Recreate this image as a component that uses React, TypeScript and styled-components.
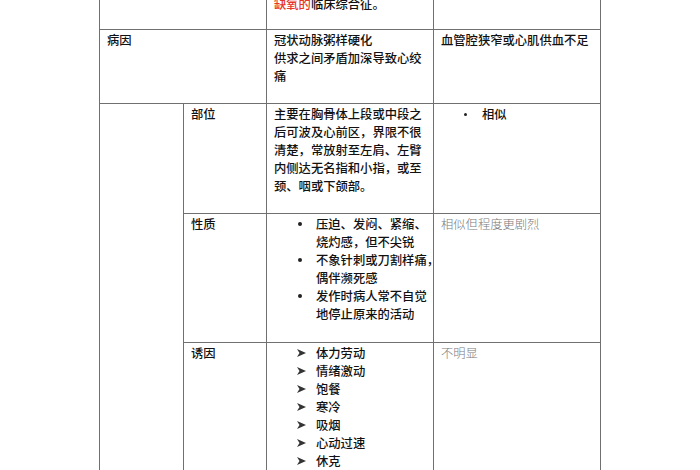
import React from 'react';
import styled, { createGlobalStyle } from 'styled-components';

const GlobalStyle = createGlobalStyle`
  html, body {
    margin: 0;
    padding: 0;
    background: #fff;
    overflow: hidden;
  }
  body {
    font-family: "Noto Sans CJK SC", "Noto Sans", sans-serif;
  }
`;

const Page = styled.div`
  width: 700px;
  height: 470px;
  overflow: hidden;
  padding-left: 99px;
  box-sizing: border-box;
`;

const Table = styled.table`
  border-collapse: collapse;
  table-layout: fixed;
  width: 501px;
  margin-top: -19px;
  font-size: 12.3px;
  line-height: 18px;
  font-weight: 500;
  color: #111;
`;

const Col = styled.col<{ $w: number }>`
  width: ${(p) => p.$w}px;
`;

const Row = styled.tr<{ $h: number }>`
  height: ${(p) => p.$h}px;
`;

const Cell = styled.td<{ $bottom?: boolean }>`
  border: 1px solid #707070;
  padding: ${(p) => (p.$bottom ? '0 7px 16px' : '1px 7px 0')};
  vertical-align: ${(p) => (p.$bottom ? 'bottom' : 'top')};
  white-space: nowrap;
`;

const Red = styled.span`
  color: #e8352b;
`;

const Line = styled.div``;

const Muted = styled.div`
  color: #7a7a7a;
  font-weight: 300;
`;

const List = styled.ul<{ $indent: number }>`
  list-style: none;
  margin: 0;
  padding: 0 0 0 ${(p) => p.$indent}px;
`;

const Item = styled.li`
  display: flex;
  align-items: flex-start;
`;

const Marker = styled.span<{ $size?: number }>`
  flex: 0 0 19px;
  display: flex;
  align-items: center;
  height: 18px;
  &::before {
    content: '';
    display: block;
    width: ${(p) => p.$size ?? 4}px;
    height: ${(p) => p.$size ?? 4}px;
    border-radius: 50%;
    background: #222;
    margin-left: 1px;
  }
`;

const ArrowMark = styled.span`
  flex: 0 0 19px;
  display: flex;
  align-items: center;
  height: 18px;
`;

const Arrow: React.FC = () => (
  <ArrowMark>
    <svg width="9" height="8" viewBox="0 0 9 8">
      <path d="M0 0 L9 4 L0 8 L2.5 4 Z" fill="#333" />
    </svg>
  </ArrowMark>
);

const Lines: React.FC<{ lines: string[] }> = ({ lines }) => (
  <>
    {lines.map((l, i) => (
      <Line key={i}>{l}</Line>
    ))}
  </>
);

const nature = [
  ['压迫、发闷、紧缩、', '烧灼感，但不尖锐'],
  ['不象针刺或刀割样痛，', '偶伴濒死感'],
  ['发作时病人常不自觉', '地停止原来的活动'],
];

const triggers = ['体力劳动', '情绪激动', '饱餐', '寒冷', '吸烟', '心动过速', '休克'];

const App: React.FC = () => {
  return (
    <Page>
      <GlobalStyle />
      <Table>
        <colgroup>
          <Col $w={84} />
          <Col $w={83} />
          <Col $w={167} />
          <Col $w={167} />
        </colgroup>
        <tbody>
          <Row $h={48}>
            <Cell colSpan={2} $bottom />
            <Cell $bottom>
              <Red>缺氧的</Red>临床综合征。
            </Cell>
            <Cell $bottom />
          </Row>
          <Row $h={74}>
            <Cell colSpan={2}>病因</Cell>
            <Cell>
              <Lines lines={['冠状动脉粥样硬化', '供求之间矛盾加深导致心绞', '痛']} />
            </Cell>
            <Cell>血管腔狭窄或心肌供血不足</Cell>
          </Row>
          <Row $h={110}>
            <Cell rowSpan={3} />
            <Cell>部位</Cell>
            <Cell>
              <Lines
                lines={[
                  '主要在胸骨体上段或中段之',
                  '后可波及心前区，界限不很',
                  '清楚，常放射至左肩、左臂',
                  '内侧达无名指和小指，或至',
                  '颈、咽或下颌部。',
                ]}
              />
            </Cell>
            <Cell>
              <List $indent={22}>
                <Item>
                  <Marker $size={3} />
                  <span>相似</span>
                </Item>
              </List>
            </Cell>
          </Row>
          <Row $h={129}>
            <Cell>性质</Cell>
            <Cell>
              <List $indent={23}>
                {nature.map((lines, i) => (
                  <Item key={i}>
                    <Marker />
                    <div>
                      <Lines lines={lines} />
                    </div>
                  </Item>
                ))}
              </List>
            </Cell>
            <Cell>
              <Muted>相似但程度更剧烈</Muted>
            </Cell>
          </Row>
          <Row $h={140}>
            <Cell>诱因</Cell>
            <Cell>
              <List $indent={23}>
                {triggers.map((t) => (
                  <Item key={t}>
                    <Arrow />
                    <span>{t}</span>
                  </Item>
                ))}
              </List>
            </Cell>
            <Cell>
              <Muted>不明显</Muted>
            </Cell>
          </Row>
        </tbody>
      </Table>
    </Page>
  );
};

export default App;
